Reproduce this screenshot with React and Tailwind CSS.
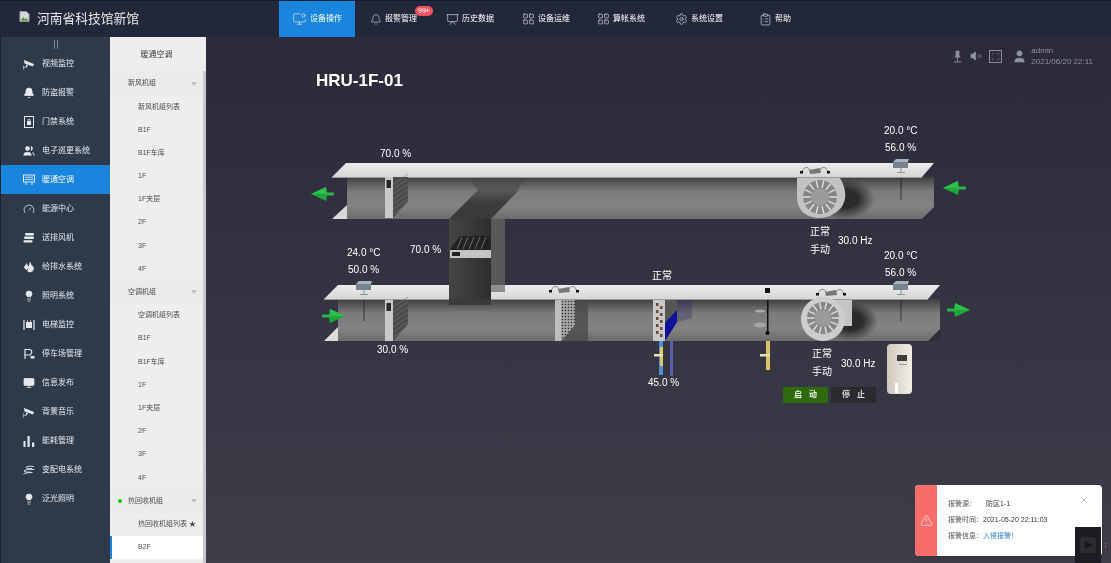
import React from 'react';
import {
  Bell, Users, Gauge, Droplets, Lightbulb, Monitor, Settings, ClipboardList, LayoutGrid,
  VolumeX, Maximize, User, TriangleAlert, X, MonitorDot, Presentation,
} from 'lucide-react';

const cjk = "font-['Liberation_Sans','Noto_Sans_CJK_SC',sans-serif]";

// small menu glyphs that lucide has no close match for
const CameraIcon = ({ className }) => (
  <svg viewBox="0 0 12 12" className={className}>
    <path d="M1 2 L11 6 L10 8.5 L1.5 5.5 Z" fill="currentColor" />
    <path d="M3 6.5 L5 7.2 L3.5 9.5 H1 V11.5 H0.4 V7.5 H1 V8.7 H3 Z" fill="currentColor" />
  </svg>
);
const DoorIcon = ({ className }) => (
  <svg viewBox="0 0 12 12" className={className}>
    <rect x="1.5" y="0.5" width="9" height="11" fill="none" stroke="currentColor" />
    <rect x="4" y="5" width="4" height="4" fill="currentColor" />
    <path d="M5 5 V3.5 H7 V5" fill="none" stroke="currentColor" strokeWidth="0.7" />
  </svg>
);
const VentIcon = ({ className }) => (
  <svg viewBox="0 0 12 12" className={className}>
    <rect x="0.5" y="1" width="11" height="7" fill="none" stroke="currentColor" />
    <path d="M2 3.2 H10 M2 5.4 H10" stroke="currentColor" strokeWidth="0.9" />
    <path d="M3 8.5 V11 M9 8.5 V11" stroke="currentColor" />
  </svg>
);
const StackIcon = ({ className }) => (
  <svg viewBox="0 0 12 12" className={className}>
    <rect x="2" y="1" width="9" height="2.4" rx="1.2" fill="currentColor" />
    <rect x="1" y="4.6" width="10" height="2.4" rx="1.2" fill="currentColor" />
    <rect x="0.5" y="8.2" width="9" height="2.4" rx="1.2" fill="currentColor" />
  </svg>
);
const LiftIcon = ({ className }) => (
  <svg viewBox="0 0 12 12" className={className}>
    <path d="M1 1 V11 M11 1 V11" stroke="currentColor" strokeWidth="1.2" />
    <rect x="3" y="3" width="6" height="6" fill="currentColor" />
    <path d="M4.5 1 V3 M7.5 1 V3" stroke="currentColor" strokeWidth="0.7" />
  </svg>
);
const ParkIcon = ({ className }) => (
  <svg viewBox="0 0 12 12" className={className}>
    <path d="M2 11 V1.5 H6 A2.6 2.6 0 0 1 6 7 H2" fill="none" stroke="currentColor" strokeWidth="1.2" />
    <rect x="7.5" y="8" width="4" height="2.6" rx="0.6" fill="currentColor" />
  </svg>
);
const BarsIcon = ({ className }) => (
  <svg viewBox="0 0 12 12" className={className}>
    <rect x="0.5" y="6" width="2" height="6" fill="currentColor" />
    <rect x="4.5" y="1" width="2.2" height="11" fill="currentColor" />
    <rect x="9" y="7.5" width="2.2" height="4.5" fill="currentColor" />
  </svg>
);
const RingsIcon = ({ className }) => (
  <svg viewBox="0 0 12 12" className={className}>
    <path d="M11 2.5 Q4 1.5 3 3.5 Q2.6 4.6 9 4.6 M11.5 5.5 Q2 5 1 7 Q0.8 8.2 8 8.2 M9.5 8.5 Q1 8.5 0.5 10.5" fill="none" stroke="currentColor" strokeWidth="0.9" />
  </svg>
);
const PinIcon = ({ className }) => (
  <svg viewBox="0 0 10 14" className={className}>
    <path d="M3 0.5 H7 V6 L8.5 8 H1.5 L3 6 Z" fill="currentColor" />
    <path d="M5 8 V12 M1 13 H9" stroke="currentColor" />
  </svg>
);

const menu = [
  { name: '视频监控', icon: CameraIcon },
  { name: '防盗报警', icon: Bell, fill: true },
  { name: '门禁系统', icon: DoorIcon },
  { name: '电子巡更系统', icon: Users, fill: true },
  { name: '暖通空调', icon: VentIcon, active: true },
  { name: '能源中心', icon: Gauge },
  { name: '送排风机', icon: StackIcon },
  { name: '给排水系统', icon: Droplets, fill: true },
  { name: '照明系统', icon: Lightbulb, fill: true },
  { name: '电梯监控', icon: LiftIcon },
  { name: '停车场管理', icon: ParkIcon },
  { name: '信息发布', icon: Monitor, fill: true },
  { name: '背景音乐', icon: CameraIcon },
  { name: '能耗管理', icon: BarsIcon },
  { name: '变配电系统', icon: RingsIcon },
  { name: '泛光照明', icon: Lightbulb, fill: true },
];

const nav = [
  { name: '设备操作', icon: MonitorDot, w: 'w-[76px] pl-[13px]', active: true, iw: 'w-[15px] h-[14px]' },
  { name: '报警管理', icon: Bell, w: 'w-[78px] pl-[15px]', badge: true, iw: 'w-[12px] h-[15px]' },
  { name: '历史数据', icon: Presentation, w: 'w-[77px] pl-[13px]', iw: 'w-[13px] h-[15px]' },
  { name: '设备运维', icon: LayoutGrid, w: 'w-[75px] pl-[12px]', iw: 'w-[13px] h-[14px]' },
  { name: '算帐系统', icon: LayoutGrid, w: 'w-[78px] pl-[12px]', iw: 'w-[13px] h-[14px]' },
  { name: '系统设置', icon: Settings, w: 'w-[84px] pl-[12px]', iw: 'w-[13px] h-[14px]' },
  { name: '帮助', icon: ClipboardList, w: 'w-[60px] pl-[12px]', iw: 'w-[13px] h-[15px]' },
];

const groups = [
  { name: '新风机组', items: ['新风机组列表', 'B1F', 'B1F车库', '1F', '1F夹层', '2F', '3F', '4F'] },
  { name: '空调机组', items: ['空调机组列表', 'B1F', 'B1F车库', '1F', '1F夹层', '2F', '3F', '4F'] },
  { name: '热回收机组', dot: true, items: ['热回收机组列表 ★', 'B2F'], current: 'B2F' },
];

const labels = [
  { text: '70.0 %', x: 380, y: 154 },
  { text: '20.0 °C', x: 884, y: 131 },
  { text: '56.0 %', x: 885, y: 148 },
  { text: '正常', x: 810, y: 232 },
  { text: '手动', x: 810, y: 250 },
  { text: '30.0 Hz', x: 838, y: 241 },
  { text: '24.0 °C', x: 347, y: 253 },
  { text: '50.0 %', x: 348, y: 270 },
  { text: '70.0 %', x: 410, y: 250 },
  { text: '20.0 °C', x: 884, y: 256 },
  { text: '56.0 %', x: 885, y: 273 },
  { text: '正常', x: 652, y: 276 },
  { text: '30.0 %', x: 377, y: 350 },
  { text: '45.0 %', x: 648, y: 383 },
  { text: '正常', x: 812, y: 354 },
  { text: '手动', x: 812, y: 372 },
  { text: '30.0 Hz', x: 841, y: 364 },
];

function Arrow({ x, y, dir }) {
  // tip at x, pointing left or right
  const s = dir === 'left' ? 1 : -1;
  return (
    <g>
      <path d={`M${x} ${y} L${x + s * 15} ${y - 7} Q${x + s * 17} ${y} ${x + s * 15} ${y + 7} Z`} fill="#1fa53a" />
      <rect x={Math.min(x + s * 15, x + s * 23)} y={y - 1.5} width="8" height="3" fill="#2bb548" />
      <path d={`M${x} ${y} L${x + s * 15} ${y - 7} L${x + s * 15} ${y} Z`} fill="#2dc04c" />
    </g>
  );
}

function Sensor({ x, y, lineTo }) {
  return (
    <g>
      <line x1={x} y1={y + 14} x2={x} y2={lineTo} stroke="#222" strokeWidth="0.8" />
      <rect x={x - 8} y={y - 2} width="15" height="6" fill="#76828f" />
      <path d={`M${x - 8} ${y - 2} L${x - 5} ${y - 5} H${x + 8} L${x + 7} ${y - 2} Z`} fill="#a9b2ba" />
      <path d={`M${x} ${y + 4} V${y + 8} M${x - 4} ${y + 8.5} H${x + 4}`} stroke="#8d959c" strokeWidth="1" />
    </g>
  );
}

function Switch({ x, y }) {
  return (
    <g>
      <path d={`M${x - 13} ${y + 1} C${x - 10} ${y - 6} ${x - 7} ${y - 4} ${x - 4} ${y} M${x + 4} ${y} C${x + 7} ${y - 4} ${x + 10} ${y - 6} ${x + 13} ${y + 1}`} stroke="#555" strokeWidth="0.7" fill="none" />
      <path d={`M${x - 6} ${y - 1} L${x + 5} ${y - 3} L${x + 6} ${y + 2} L${x - 5} ${y + 3} Z`} fill="#777" />
      <rect x={x - 15} y={y} width="3" height="2.5" fill="#111" />
      <rect x={x + 12} y={y} width="3" height="2.5" fill="#111" />
    </g>
  );
}

function Damper({ x, y }) {
  return (
    <g>
      <path d={`M${x + 8} ${y} H${x + 23} V${y + 24} L${x + 8} ${y + 41} Z`} fill="#4b4b4b" />
      {[3, 8, 13, 18, 23, 28, 33].map((d) => (
        <path key={d} d={`M${x + 8} ${y + d + 4} L${x + 23} ${y + d - 6}`} stroke="#777" strokeWidth="0.6" />
      ))}
      <rect x={x} y={y} width="8" height="41" fill="#c9c9c9" />
      <rect x={x + 1.5} y={y + 3} width="4.5" height="8" fill="#262626" />
    </g>
  );
}

function Wheel({ cx, cy, r }) {
  return (
    <g>
      <circle cx={cx} cy={cy} r={r} fill="#868686" />
      {Array.from({ length: 14 }, (_, i) => {
        const a = (i * Math.PI * 2) / 14;
        return (
          <line key={i} x1={cx + Math.cos(a) * r * 0.55} y1={cy + Math.sin(a) * r * 0.55} x2={cx + Math.cos(a) * r} y2={cy + Math.sin(a) * r} stroke="#dedede" strokeWidth="1.5" />
        );
      })}
      <circle cx={cx} cy={cy} r={r * 0.52} fill="#9b9b9b" />
    </g>
  );
}

function Plant() {
  return (
    <svg viewBox="300 120 680 290" className="absolute inset-0 h-[290px] w-[680px]">
      <defs>
        <linearGradient id="body" x1="0" y1="0" x2="0" y2="1">
          <stop offset="0" stopColor="#3f3f3f" />
          <stop offset="0.35" stopColor="#7c7c7c" />
          <stop offset="0.7" stopColor="#838383" />
          <stop offset="1" stopColor="#6c6c6c" />
        </linearGradient>
        <linearGradient id="top" x1="0" y1="0" x2="0" y2="1">
          <stop offset="0" stopColor="#ececec" />
          <stop offset="1" stopColor="#d6d6d6" />
        </linearGradient>
        <linearGradient id="riser" x1="0" y1="0" x2="1" y2="0">
          <stop offset="0" stopColor="#454545" />
          <stop offset="1" stopColor="#2e2e2e" />
        </linearGradient>
        <linearGradient id="riserTop" x1="0" y1="0" x2="0" y2="1">
          <stop offset="0" stopColor="#3a3a3a" stopOpacity="0.1" />
          <stop offset="0.6" stopColor="#3c3c3c" />
          <stop offset="1" stopColor="#3a3a3a" />
        </linearGradient>
        <radialGradient id="shade">
          <stop offset="0.45" stopColor="#1c1c1c" stopOpacity="0.85" />
          <stop offset="1" stopColor="#1c1c1c" stopOpacity="0" />
        </radialGradient>
        <pattern id="mesh" width="3" height="3" patternUnits="userSpaceOnUse">
          <circle cx="1.5" cy="1.5" r="0.8" fill="#2e2e2e" />
        </pattern>
      </defs>

      {/* upper duct */}
      <rect x="347" y="177" width="587" height="42" fill="url(#body)" />
      <path d="M332 219 L347 205 V219 Z" fill="#d9d9d9" />
      <path d="M922 219 L934 207 V219 Z" fill="#2f2e3f" />

      {/* riser between the ducts */}
      <path d="M449 219 L478 190 L470 178 H525 L517 192 L491 219 Z" fill="url(#riserTop)" />
      <rect x="449" y="219" width="42" height="81" fill="url(#riser)" />
      <rect x="491" y="219" width="14" height="66" fill="#585858" />

      <path d="M332 177 L346 163 H934 L922 177 Z" fill="url(#top)" />
      <rect x="332" y="177" width="590" height="1" fill="#9a9a9a" />

      {/* mixing damper */}
      <path d="M450 249 L460 236 H491 V250 H450 Z" fill="#222" />
      {[462, 468, 474, 480, 486].map((x) => (
        <path key={x} d={`M${x} 237 L${x - 5} 249`} stroke="#6d6d6d" strokeWidth="1" />
      ))}
      <rect x="450" y="250" width="41" height="8" fill="#c4c4c4" />
      <rect x="452" y="252" width="8" height="4" fill="#222" />

      <Damper x={385} y={177} />

      {/* supply fan, upper duct */}
      <ellipse cx="845" cy="199" rx="30" ry="20" fill="url(#shade)" />
      <path d="M797 178 H840 Q850 195 841 208 Q832 218 818 218 Q797 216 797 196 Z" fill="#c3c3c3" />
      <Wheel cx={820} cy={197} r={17} />
      <Switch x={815} y={171} />
      <Sensor x={901} y={164} lineTo={200} />

      {/* lower duct */}
      <rect x="338" y="299" width="602" height="42" fill="url(#body)" />
      <rect x="449" y="299" width="42" height="6" fill="#3a3a3a" />
      <path d="M324 341 L338 327 V341 Z" fill="#dcdcdc" />
      <path d="M928 341 L940 329 V341 Z" fill="#2f2e3f" />
      <path d="M324 299 L338 285 H449 V299 Z" fill="url(#top)" />
      <path d="M491 285 H940 L928 299 H491 Z" fill="url(#top)" />
      <rect x="324" y="299" width="125" height="1" fill="#9a9a9a" />
      <rect x="491" y="299" width="437" height="1" fill="#9a9a9a" />
      <path d="M491 285 H505 V292 H491 Z" fill="#8d8d8d" />

      <Sensor x={364} y={286} lineTo={321} />
      <Damper x={385} y={300} />

      {/* filter */}
      <path d="M575 300 H588 V341 H561 L575 325 Z" fill="#484848" opacity="0.75" />
      <path d="M561 300 H575 V325 L561 341 Z" fill="#a5a5a5" />
      <path d="M561 300 H575 V325 L561 341 Z" fill="url(#mesh)" />
      <rect x="555" y="300" width="6" height="41" fill="#bdbdbd" />
      <Switch x={564} y={290} />

      {/* coil */}
      <rect x="653" y="300" width="12" height="41" fill="#c9c9c9" />
      {[303, 310, 317, 324, 331].map((y) => (
        <g key={y}>
          <rect x="656" y={y} width="2.5" height="3" fill="#6b4a3a" />
          <rect x="660" y={y + 3} width="2.5" height="3" fill="#6b4a3a" />
        </g>
      ))}
      <path d="M665 300 H677 V322 L665 341 Z" fill="#555" />
      <path d="M665 323 L677 310 V322 L665 341 Z" fill="#10109a" />
      <path d="M677 300 H692 V318 L677 322 Z" fill="#24245f" opacity="0.3" />

      {/* humidifier */}
      <rect x="767" y="300" width="1.5" height="32" fill="#111" />
      <circle cx="767.5" cy="333" r="2" fill="#111" />
      <rect x="765" y="288" width="5" height="5" fill="#111" />
      <ellipse cx="760" cy="311" rx="5" ry="1.5" fill="#a8a8a8" />
      <ellipse cx="760" cy="325" rx="6" ry="2.5" fill="#a8a8a8" />

      {/* supply fan, lower duct */}
      <ellipse cx="850" cy="321" rx="28" ry="20" fill="url(#shade)" />
      <rect x="815" y="300" width="37" height="26" fill="#c4c4c4" />
      <circle cx="823" cy="319" r="22" fill="#cdcdcd" />
      <Wheel cx={823} cy={318} r={16} />
      <Switch x={831} y={293} />
      <Sensor x={901} y={286} lineTo={321} />

      <Arrow x={311} y={194} dir="left" />
      <Arrow x={943} y={188} dir="left" />
      <Arrow x={345} y={316} dir="right" />
      <Arrow x={970} y={310} dir="right" />

      {/* pipes under the coil and the humidifier */}
      <rect x="659" y="341" width="4" height="34" fill="#4f8fd0" />
      <rect x="660" y="347" width="3" height="19" fill="#dcc868" />
      <rect x="654" y="354" width="9" height="2.5" fill="#eee3b0" />
      <rect x="670" y="341" width="3" height="35" fill="#5a5fa8" />
      <rect x="766" y="341" width="4" height="29" fill="#d8c464" />
      <rect x="760" y="354" width="10" height="2.5" fill="#eee3b0" />
    </svg>
  );
}

export default function App() {
  return (
    <div className={`flex h-[563px] w-[1111px] flex-col overflow-hidden bg-[#22273a] blur-[0.35px] ${cjk}`}>
      <header className="relative flex h-[37px] shrink-0 border-t border-[#0d2030] bg-[#22273a]">
        <div className="flex w-[279px] items-center pl-[19px] text-[12.75px] text-[#e8e8e8]">
          <svg viewBox="0 0 11 12" className="mb-[5px] mr-[7px] h-[11px] w-[11px]">
            <path d="M0.5 0.5 H7.5 L10.5 3.5 V11.5 H0.5 Z" fill="#d8d8d8" stroke="#999" />
            <path d="M1.5 10.5 L4 6.5 L6 9 L7.5 7.5 L9.5 10.5 Z" fill="#4c9a3a" />
          </svg>
          河南省科技馆新馆
        </div>
        {nav.map((n) => (
          <div key={n.name} className={`relative flex items-center text-[8px] text-white ${n.w} ${n.active ? 'bg-[#1a85dc]' : ''}`}>
            <n.icon strokeWidth={1.2} className={`mr-[3px] shrink-0 text-[#dfe3ea] ${n.iw}`} />
            <span className="whitespace-nowrap">{n.name}</span>
            {n.badge && (
              <span className="absolute left-[60px] top-[5px] rounded-full bg-[#ef5360] px-[3px] text-[7px] leading-[10px] text-white">99+</span>
            )}
          </div>
        ))}
      </header>

      <div className="flex min-h-0 flex-1">
        <aside className="w-[110px] shrink-0 border-l border-[#1b2230] bg-[#2e3a4a] pt-[2px]">
          <div className="mx-auto flex h-[10px] w-[4px] justify-between pt-[1px]">
            <span className="w-px bg-[#7c8592]" />
            <span className="w-px bg-[#7c8592]" />
          </div>
          {menu.map((m) => (
            <div key={m.name} className={`flex h-[29px] items-center pl-[22px] text-[8px] text-[#e6eaef] ${m.active ? 'bg-[#1a85dc] text-white' : ''}`}>
              <m.icon strokeWidth={1.5} fill={m.fill ? 'currentColor' : 'none'} className="mr-[7px] h-3 w-3 shrink-0 text-[#e6eaef]" />
              {m.name}
            </div>
          ))}
        </aside>

        <div className="relative w-[96px] shrink-0 overflow-hidden bg-[#efeeef] text-[7px] text-[#4d4d50]">
          <div className="flex h-[35px] items-center justify-center pr-[3px] text-[8px] text-[#3b3b3e]">暖通空调</div>
          {groups.map((g) => (
            <div key={g.name}>
              <div className="relative flex h-[23.2px] items-center bg-[#ebeaec] pl-[18px]">
                {g.dot && <span className="absolute left-[8px] h-[4px] w-[4px] rounded-full bg-[#0ec20e]" />}
                {g.name}
                <span className="absolute right-[9px] h-0 w-0 border-x-[3px] border-t-[4px] border-x-transparent border-t-[#bbbbbe]" />
              </div>
              {g.items.map((item) => (
                <div key={item} className={`flex h-[23.2px] items-center ${g.current === item ? 'border-l-2 border-[#1a85dc] bg-white pl-[26px]' : 'pl-[28px]'}`}>
                  {item}
                </div>
              ))}
            </div>
          ))}
          <div className="absolute right-0 top-[34px] bottom-0 w-[3px] bg-[#c8c8cb]" />
        </div>

        <main className="relative min-w-0 flex-1 bg-gradient-to-b from-[#2b2a3b] to-[#3e3d49] pl-[110px] pt-[34px]">
          <div className="absolute right-[18px] top-[8px] flex items-center text-[#8f929a]">
            <PinIcon className="mr-[8px] h-[13px] w-[9px]" />
            <VolumeX size={12} strokeWidth={1.5} fill="currentColor" className="mr-[7px]" />
            <div className="mr-[10px] flex h-[13px] w-[13px] items-center justify-center border border-[#8f929a]">
              <Maximize size={9} strokeWidth={1.2} />
            </div>
            <User size={15} strokeWidth={1.5} fill="currentColor" className="mr-[4px]" />
            <div className="text-[8px] leading-[11px]">
              <div>admin</div>
              <div>2021/06/20 22:11</div>
            </div>
          </div>

          <h1 className="font-['Liberation_Sans',sans-serif] text-[17px] font-bold leading-5 text-white">HRU-1F-01</h1>

          <div className="relative -ml-4 mt-[29px] h-[290px] w-[680px]">
            <Plant />
            {labels.map((l) => (
              <span key={`${l.text}${l.x}${l.y}`} className="absolute whitespace-nowrap text-[10px] leading-3 text-white" style={{ left: l.x - 300, top: l.y - 126 }}>
                {l.text}
              </span>
            ))}
            <div className="absolute left-[483px] top-[267px] flex gap-[3px] text-[8px] font-bold">
              <button className="h-4 w-[45px] bg-[#2f6a0e] pl-[7px] tracking-[7px] text-[#e8f3df]">启动</button>
              <button className="h-4 w-[45px] bg-[#2b2b2f] pl-[7px] tracking-[7px] text-[#dcdcdc]">停止</button>
            </div>
            <div className="absolute left-[587px] top-[224px] flex h-[50px] w-[25px] flex-col items-end rounded-sm bg-gradient-to-r from-[#cfc9be] to-[#f3eee4] pr-[5px] pt-[11px]">
              <div className="h-[6px] w-[10px] bg-[#3d3d3d]" />
              <div className="mt-[3px] h-px w-[8px] bg-[#999]" />
              <div className="mr-[9px] mt-auto mb-[1px] h-[10px] w-[3px] bg-white" />
            </div>
          </div>

          <div className="absolute left-[709px] top-[448px] flex h-[71px] w-[187px] overflow-hidden rounded bg-white text-[7px] text-[#555] shadow-md">
            <div className="flex w-[22px] items-center justify-center bg-[#f96c6c]">
              <TriangleAlert size={13} strokeWidth={1.2} className="text-white" />
            </div>
            <div className="flex-1 pl-[11px] pt-[11px] leading-4">
              <div>报警源： <span className="ml-2 text-[#333]">防区1-1</span></div>
              <div>报警时间：<span className="text-[#333]">2021-05-20 22:11:03</span></div>
              <div>报警信息：<span className="text-[#2f7fc4]">入侵报警！</span></div>
            </div>
            <X size={10} strokeWidth={1.5} className="absolute right-[13px] top-[10px] text-[#999]" />
          </div>

          <div className="absolute bottom-0 left-[869px] flex h-[36px] w-[26px] items-center justify-center bg-[#1c1c22]">
            <div className="flex h-[16px] w-[16px] items-center justify-center rounded bg-[#2c2c30]">
              <span className="h-0 w-0 border-y-[4px] border-l-[7px] border-y-transparent border-l-[#17171b]" />
            </div>
          </div>
          <div className="absolute bottom-[15px] right-[5px] flex flex-col gap-px">
            <span className="h-px w-px bg-[#c96a6a]" />
            <span className="h-px w-px bg-[#c96a6a]" />
            <span className="h-px w-px bg-[#c96a6a]" />
          </div>
        </main>
      </div>
    </div>
  );
}
